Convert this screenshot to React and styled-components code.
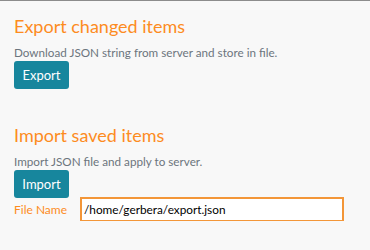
import React from "react";
import styled, { createGlobalStyle } from "styled-components";

const GlobalStyle = createGlobalStyle`
  html, body {
    margin: 0;
    padding: 0;
    background: #f8f8f8;
  }
  body {
    font-family: Lato, "Open Sans", sans-serif;
    border-top: 1px solid #8c8c8c;
  }
`;

const Page = styled.div`
  padding: 14px 14px 0 14px;
`;

const Section = styled.section`
  margin-bottom: ${(p) => p.gap || 0}px;
`;

const Heading = styled.h2`
  margin: 0 0 7px 0;
  font-size: 18px;
  font-weight: 400;
  line-height: 22px;
  color: #fd8c1f;
`;

const Description = styled.p`
  margin: 0 0 1px 0;
  font-size: 11.7px;
  line-height: 16px;
  color: #6c757d;
`;

const Button = styled.button`
  display: block;
  box-sizing: border-box;
  width: 55px;
  height: 28px;
  padding: 0;
  border: none;
  border-radius: 3px;
  background: #17869d;
  color: #fff;
  font-family: inherit;
  font-size: 13px;
  cursor: pointer;
`;

const Row = styled.div`
  display: flex;
  align-items: center;
`;

const Label = styled.label`
  width: 67px;
  font-size: 12px;
  color: #fd8c1f;
`;

const Input = styled.input`
  box-sizing: border-box;
  width: 262px;
  height: 23px;
  padding: 0 2px;
  border: 1px solid #8f8f8f;
  outline: 2px solid #f39638;
  outline-offset: -1px;
  background: #fff;
  font-family: inherit;
  font-size: 11.8px;
  color: #000;
`;

export default function App() {
  return (
    <>
      <GlobalStyle />
      <Page>
        <Section gap={35}>
          <Heading>Export changed items</Heading>
          <Description>Download JSON string from server and store in file.</Description>
          <Button>Export</Button>
        </Section>
        <Section>
          <Heading>Import saved items</Heading>
          <Description>Import JSON file and apply to server.</Description>
          <Button>Import</Button>
          <Row>
            <Label htmlFor="filename">File Name</Label>
            <Input id="filename" defaultValue="/home/gerbera/export.json" readOnly />
          </Row>
        </Section>
      </Page>
    </>
  );
}
